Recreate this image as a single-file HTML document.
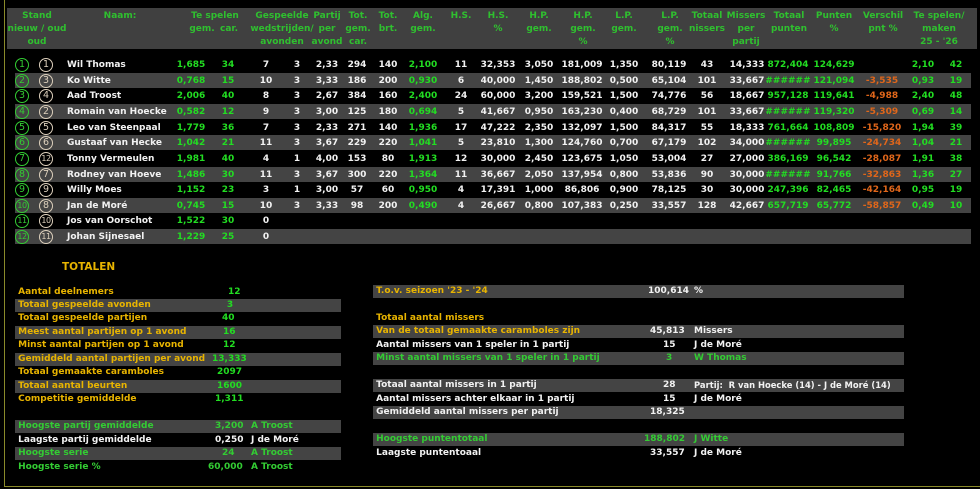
<!DOCTYPE html>
<html><head><meta charset="utf-8"><style>
*{margin:0;padding:0;box-sizing:border-box}
body{width:980px;height:489px;background:#000;position:relative;overflow:hidden;font-family:"DejaVu Sans","Liberation Sans",sans-serif;font-weight:bold;font-size:9px;color:#f2f2f2}
.a{position:absolute;white-space:nowrap}
.hd{position:absolute;left:7px;top:8px;width:970px;height:41px;background:#404040}
.h{position:absolute;width:80px;margin-left:-40px;text-align:center;color:#2fc02f;line-height:13px}
.r{position:absolute;left:0;width:980px;height:16px;line-height:16px}
.r.g::before{content:"";position:absolute;left:15px;width:956px;top:0;height:15px;background:#444}
.r span{position:absolute;width:60px;margin-left:-30px;text-align:center}
.r span.n{width:auto;margin-left:0;text-align:left;left:67px}
.gr{color:#22dd22}.or{color:#e0661a}.ye{color:#e8b400}.gl{color:#33cc33}
.ci{position:absolute;width:14px;height:14px;border:1.5px solid #3c3;border-radius:50%;top:0.5px;font-size:9.5px;line-height:11px;text-align:center;font-weight:normal;font-style:normal;color:#3c3}
.co{border-color:#ddd0bc;color:#ddd0bc}
.ci.s{font-size:8px;letter-spacing:-0.5px}
.b{position:absolute;height:13px;line-height:13px;width:100%}
.bg{background:#444}
</style></head><body>
<div class="a" style="left:4px;top:0;width:1px;height:487px;background:#8a8a2a"></div>
<div class="a" style="left:4px;top:486px;width:976px;height:1px;background:#8a8a2a"></div>
<div class="hd"></div>
<div class="h" style="left:37px;top:10px">Stand</div>
<div class="h" style="left:37px;top:23px">nieuw / oud</div>
<div class="h" style="left:37px;top:36px">oud</div>
<div class="h" style="left:120px;top:10px">Naam:</div>
<div class="h" style="left:215px;top:10px">Te spelen</div>
<div class="h" style="left:202px;top:23px">gem.</div>
<div class="h" style="left:229px;top:23px">car.</div>
<div class="h" style="left:282px;top:10px">Gespeelde</div>
<div class="h" style="left:282px;top:23px">wedstrijden/</div>
<div class="h" style="left:282px;top:36px">avonden</div>
<div class="h" style="left:327px;top:10px">Partij</div><div class="h" style="left:327px;top:23px">per</div><div class="h" style="left:327px;top:36px">avond</div>
<div class="h" style="left:358px;top:10px">Tot.</div><div class="h" style="left:358px;top:23px">gem.</div><div class="h" style="left:358px;top:36px">car.</div>
<div class="h" style="left:388px;top:10px">Tot.</div><div class="h" style="left:388px;top:23px">brt.</div>
<div class="h" style="left:423px;top:10px">Alg.</div><div class="h" style="left:423px;top:23px">gem.</div>
<div class="h" style="left:461px;top:10px">H.S.</div>
<div class="h" style="left:498px;top:10px">H.S.</div><div class="h" style="left:498px;top:23px">%</div>
<div class="h" style="left:539px;top:10px">H.P.</div><div class="h" style="left:539px;top:23px">gem.</div>
<div class="h" style="left:583px;top:10px">H.P.</div><div class="h" style="left:583px;top:23px">gem.</div><div class="h" style="left:583px;top:36px">%</div>
<div class="h" style="left:624px;top:10px">L.P.</div><div class="h" style="left:624px;top:23px">gem.</div>
<div class="h" style="left:670px;top:10px">L.P.</div><div class="h" style="left:670px;top:23px">gem.</div><div class="h" style="left:670px;top:36px">%</div>
<div class="h" style="left:707px;top:10px">Totaal</div><div class="h" style="left:707px;top:23px">nissers</div>
<div class="h" style="left:746px;top:10px">Missers</div><div class="h" style="left:746px;top:23px">per</div><div class="h" style="left:746px;top:36px">partij</div>
<div class="h" style="left:789px;top:10px">Totaal</div><div class="h" style="left:789px;top:23px">punten</div>
<div class="h" style="left:834px;top:10px">Punten</div><div class="h" style="left:834px;top:23px">%</div>
<div class="h" style="left:883px;top:10px">Verschil</div><div class="h" style="left:883px;top:23px">pnt %</div>
<div class="h" style="left:939px;top:10px">Te spelen/</div><div class="h" style="left:939px;top:23px">maken</div><div class="h" style="left:939px;top:36px">25 - '26</div>

<div class="r" style="top:57px"><i class="ci" style="left:15px">1</i><i class="ci co" style="left:39px">1</i><span class="n">Wil Thomas</span><span class="gr" style="left:191px">1,685</span><span class="gr" style="left:228px">34</span><span style="left:266px">7</span><span style="left:297px">3</span><span style="left:327px">2,33</span><span style="left:357px">294</span><span style="left:388px">140</span><span class="gr" style="left:423px">2,100</span><span style="left:461px">11</span><span style="left:498px">32,353</span><span style="left:539px">3,050</span><span style="left:582px">181,009</span><span style="left:624px">1,350</span><span style="left:669px">80,119</span><span style="left:707px">43</span><span style="left:747px">14,333</span><span class="gr" style="left:788px">872,404</span><span class="gr" style="left:834px">124,629</span><span class="gr" style="left:923px">2,10</span><span class="gr" style="left:956px">42</span></div>
<div class="r g" style="top:73px"><i class="ci" style="left:15px">2</i><i class="ci co" style="left:39px">3</i><span class="n">Ko Witte</span><span class="gr" style="left:191px">0,768</span><span class="gr" style="left:228px">15</span><span style="left:266px">10</span><span style="left:297px">3</span><span style="left:327px">3,33</span><span style="left:357px">186</span><span style="left:388px">200</span><span class="gr" style="left:423px">0,930</span><span style="left:461px">6</span><span style="left:498px">40,000</span><span style="left:539px">1,450</span><span style="left:582px">188,802</span><span style="left:624px">0,500</span><span style="left:669px">65,104</span><span style="left:707px">101</span><span style="left:747px">33,667</span><span class="gr" style="left:788px">######</span><span class="gr" style="left:834px">121,094</span><span class="or" style="left:882px">-3,535</span><span class="gr" style="left:923px">0,93</span><span class="gr" style="left:956px">19</span></div>
<div class="r" style="top:88px"><i class="ci" style="left:15px">3</i><i class="ci co" style="left:39px">4</i><span class="n">Aad Troost</span><span class="gr" style="left:191px">2,006</span><span class="gr" style="left:228px">40</span><span style="left:266px">8</span><span style="left:297px">3</span><span style="left:327px">2,67</span><span style="left:357px">384</span><span style="left:388px">160</span><span class="gr" style="left:423px">2,400</span><span style="left:461px">24</span><span style="left:498px">60,000</span><span style="left:539px">3,200</span><span style="left:582px">159,521</span><span style="left:624px">1,500</span><span style="left:669px">74,776</span><span style="left:707px">56</span><span style="left:747px">18,667</span><span class="gr" style="left:788px">957,128</span><span class="gr" style="left:834px">119,641</span><span class="or" style="left:882px">-4,988</span><span class="gr" style="left:923px">2,40</span><span class="gr" style="left:956px">48</span></div>
<div class="r g" style="top:104px"><i class="ci" style="left:15px">4</i><i class="ci co" style="left:39px">2</i><span class="n">Romain van Hoecke</span><span class="gr" style="left:191px">0,582</span><span class="gr" style="left:228px">12</span><span style="left:266px">9</span><span style="left:297px">3</span><span style="left:327px">3,00</span><span style="left:357px">125</span><span style="left:388px">180</span><span class="gr" style="left:423px">0,694</span><span style="left:461px">5</span><span style="left:498px">41,667</span><span style="left:539px">0,950</span><span style="left:582px">163,230</span><span style="left:624px">0,400</span><span style="left:669px">68,729</span><span style="left:707px">101</span><span style="left:747px">33,667</span><span class="gr" style="left:788px">######</span><span class="gr" style="left:834px">119,320</span><span class="or" style="left:882px">-5,309</span><span class="gr" style="left:923px">0,69</span><span class="gr" style="left:956px">14</span></div>
<div class="r" style="top:120px"><i class="ci" style="left:15px">5</i><i class="ci co" style="left:39px">5</i><span class="n">Leo van Steenpaal</span><span class="gr" style="left:191px">1,779</span><span class="gr" style="left:228px">36</span><span style="left:266px">7</span><span style="left:297px">3</span><span style="left:327px">2,33</span><span style="left:357px">271</span><span style="left:388px">140</span><span class="gr" style="left:423px">1,936</span><span style="left:461px">17</span><span style="left:498px">47,222</span><span style="left:539px">2,350</span><span style="left:582px">132,097</span><span style="left:624px">1,500</span><span style="left:669px">84,317</span><span style="left:707px">55</span><span style="left:747px">18,333</span><span class="gr" style="left:788px">761,664</span><span class="gr" style="left:834px">108,809</span><span class="or" style="left:882px">-15,820</span><span class="gr" style="left:923px">1,94</span><span class="gr" style="left:956px">39</span></div>
<div class="r g" style="top:135px"><i class="ci" style="left:15px">6</i><i class="ci co" style="left:39px">6</i><span class="n">Gustaaf van Hecke</span><span class="gr" style="left:191px">1,042</span><span class="gr" style="left:228px">21</span><span style="left:266px">11</span><span style="left:297px">3</span><span style="left:327px">3,67</span><span style="left:357px">229</span><span style="left:388px">220</span><span class="gr" style="left:423px">1,041</span><span style="left:461px">5</span><span style="left:498px">23,810</span><span style="left:539px">1,300</span><span style="left:582px">124,760</span><span style="left:624px">0,700</span><span style="left:669px">67,179</span><span style="left:707px">102</span><span style="left:747px">34,000</span><span class="gr" style="left:788px">######</span><span class="gr" style="left:834px">99,895</span><span class="or" style="left:882px">-24,734</span><span class="gr" style="left:923px">1,04</span><span class="gr" style="left:956px">21</span></div>
<div class="r" style="top:151px"><i class="ci" style="left:15px">7</i><i class="ci co s" style="left:39px">12</i><span class="n">Tonny Vermeulen</span><span class="gr" style="left:191px">1,981</span><span class="gr" style="left:228px">40</span><span style="left:266px">4</span><span style="left:297px">1</span><span style="left:327px">4,00</span><span style="left:357px">153</span><span style="left:388px">80</span><span class="gr" style="left:423px">1,913</span><span style="left:461px">12</span><span style="left:498px">30,000</span><span style="left:539px">2,450</span><span style="left:582px">123,675</span><span style="left:624px">1,050</span><span style="left:669px">53,004</span><span style="left:707px">27</span><span style="left:747px">27,000</span><span class="gr" style="left:788px">386,169</span><span class="gr" style="left:834px">96,542</span><span class="or" style="left:882px">-28,087</span><span class="gr" style="left:923px">1,91</span><span class="gr" style="left:956px">38</span></div>
<div class="r g" style="top:167px"><i class="ci" style="left:15px">8</i><i class="ci co" style="left:39px">7</i><span class="n">Rodney van Hoeve</span><span class="gr" style="left:191px">1,486</span><span class="gr" style="left:228px">30</span><span style="left:266px">11</span><span style="left:297px">3</span><span style="left:327px">3,67</span><span style="left:357px">300</span><span style="left:388px">220</span><span class="gr" style="left:423px">1,364</span><span style="left:461px">11</span><span style="left:498px">36,667</span><span style="left:539px">2,050</span><span style="left:582px">137,954</span><span style="left:624px">0,800</span><span style="left:669px">53,836</span><span style="left:707px">90</span><span style="left:747px">30,000</span><span class="gr" style="left:788px">######</span><span class="gr" style="left:834px">91,766</span><span class="or" style="left:882px">-32,863</span><span class="gr" style="left:923px">1,36</span><span class="gr" style="left:956px">27</span></div>
<div class="r" style="top:182px"><i class="ci" style="left:15px">9</i><i class="ci co" style="left:39px">9</i><span class="n">Willy Moes</span><span class="gr" style="left:191px">1,152</span><span class="gr" style="left:228px">23</span><span style="left:266px">3</span><span style="left:297px">1</span><span style="left:327px">3,00</span><span style="left:357px">57</span><span style="left:388px">60</span><span class="gr" style="left:423px">0,950</span><span style="left:461px">4</span><span style="left:498px">17,391</span><span style="left:539px">1,000</span><span style="left:582px">86,806</span><span style="left:624px">0,900</span><span style="left:669px">78,125</span><span style="left:707px">30</span><span style="left:747px">30,000</span><span class="gr" style="left:788px">247,396</span><span class="gr" style="left:834px">82,465</span><span class="or" style="left:882px">-42,164</span><span class="gr" style="left:923px">0,95</span><span class="gr" style="left:956px">19</span></div>
<div class="r g" style="top:198px"><i class="ci s" style="left:15px">10</i><i class="ci co" style="left:39px">8</i><span class="n">Jan de Moré</span><span class="gr" style="left:191px">0,745</span><span class="gr" style="left:228px">15</span><span style="left:266px">10</span><span style="left:297px">3</span><span style="left:327px">3,33</span><span style="left:357px">98</span><span style="left:388px">200</span><span class="gr" style="left:423px">0,490</span><span style="left:461px">4</span><span style="left:498px">26,667</span><span style="left:539px">0,800</span><span style="left:582px">107,383</span><span style="left:624px">0,250</span><span style="left:669px">33,557</span><span style="left:707px">128</span><span style="left:747px">42,667</span><span class="gr" style="left:788px">657,719</span><span class="gr" style="left:834px">65,772</span><span class="or" style="left:882px">-58,857</span><span class="gr" style="left:923px">0,49</span><span class="gr" style="left:956px">10</span></div>
<div class="r" style="top:213px"><i class="ci s" style="left:15px">11</i><i class="ci co s" style="left:39px">10</i><span class="n">Jos van Oorschot</span><span class="gr" style="left:191px">1,522</span><span class="gr" style="left:228px">30</span><span style="left:266px">0</span></div>
<div class="r g" style="top:229px"><i class="ci s" style="left:15px">12</i><i class="ci co s" style="left:39px">11</i><span class="n">Johan Sijnesael</span><span class="gr" style="left:191px">1,229</span><span class="gr" style="left:228px">25</span><span style="left:266px">0</span></div>

<div class="a ye" style="left:62px;top:261px;font-size:10.5px">TOTALEN</div>

<div class="a" style="left:15px;top:0;width:326px;height:489px">
<div class="b ye" style="top:286px">&nbsp;Aantal deelnemers<span class="a gr" style="left:213px">12</span></div>
<div class="b bg ye" style="top:299px">&nbsp;Totaal gespeelde avonden<span class="a gr" style="left:210px;width:10px;text-align:center">3</span></div>
<div class="b ye" style="top:312px">&nbsp;Totaal gespeelde partijen<span class="a gr" style="left:207px">40</span></div>
<div class="b bg ye" style="top:326px">&nbsp;Meest aantal partijen op 1 avond<span class="a gr" style="left:208px">16</span></div>
<div class="b ye" style="top:339px">&nbsp;Minst aantal partijen op 1 avond<span class="a gr" style="left:208px">12</span></div>
<div class="b bg ye" style="top:353px">&nbsp;Gemiddeld aantal partijen per avond<span class="a gr" style="left:197px">13,333</span></div>
<div class="b ye" style="top:366px">&nbsp;Totaal gemaakte caramboles<span class="a gr" style="left:202px">2097</span></div>
<div class="b bg ye" style="top:380px">&nbsp;Totaal aantal beurten<span class="a gr" style="left:202px">1600</span></div>
<div class="b ye" style="top:393px">&nbsp;Competitie gemiddelde<span class="a gr" style="left:200px">1,311</span></div>
<div class="b bg gl" style="top:420px">&nbsp;Hoogste partij gemiddelde<span class="a" style="left:200px">3,200</span><span class="a" style="left:236px">A Troost</span></div>
<div class="b" style="top:434px">&nbsp;Laagste partij gemiddelde<span class="a" style="left:200px">0,250</span><span class="a" style="left:236px">J de Moré</span></div>
<div class="b bg gl" style="top:447px">&nbsp;Hoogste serie<span class="a" style="left:207px">24</span><span class="a" style="left:236px">A Troost</span></div>
<div class="b gl" style="top:461px">&nbsp;Hoogste serie %<span class="a" style="left:193px">60,000</span><span class="a" style="left:236px">A Troost</span></div>
</div>

<div class="a" style="left:373px;top:0;width:531px;height:489px">
<div class="b bg ye" style="top:285px">&nbsp;T.o.v. seizoen '23 - '24<span class="a" style="left:275px;color:#f2f2f2">100,614</span><span class="a" style="left:321px;color:#f2f2f2">%</span></div>
<div class="b ye" style="top:312px">&nbsp;Totaal aantal missers</div>
<div class="b bg ye" style="top:325px">&nbsp;Van de totaal gemaakte caramboles zijn<span class="a" style="left:277px;color:#f2f2f2">45,813</span><span class="a" style="left:321px;color:#f2f2f2">Missers</span></div>
<div class="b" style="top:339px">&nbsp;Aantal missers van 1 speler in 1 partij<span class="a" style="left:290px">15</span><span class="a" style="left:321px">J de Moré</span></div>
<div class="b bg gl" style="top:352px">&nbsp;Minst aantal missers van 1 speler in 1 partij<span class="a" style="left:293px">3</span><span class="a" style="left:321px">W Thomas</span></div>
<div class="b bg" style="top:379px">&nbsp;Totaal aantal missers in 1 partij<span class="a" style="left:290px">28</span><span class="a" style="left:321px;font-size:8.4px">Partij:&nbsp; R van Hoecke (14) - J de Moré (14)</span></div>
<div class="b" style="top:393px">&nbsp;Aantal missers achter elkaar in 1 partij<span class="a" style="left:290px">15</span><span class="a" style="left:321px">J de Moré</span></div>
<div class="b bg" style="top:406px">&nbsp;Gemiddeld aantal missers per partij<span class="a" style="left:277px">18,325</span></div>
<div class="b bg gl" style="top:433px">&nbsp;Hoogste puntentotaal<span class="a" style="left:271px">188,802</span><span class="a" style="left:321px">J Witte</span></div>
<div class="b" style="top:447px">&nbsp;Laagste puntentoaal<span class="a" style="left:277px">33,557</span><span class="a" style="left:321px">J de Moré</span></div>
</div>
</body></html>
